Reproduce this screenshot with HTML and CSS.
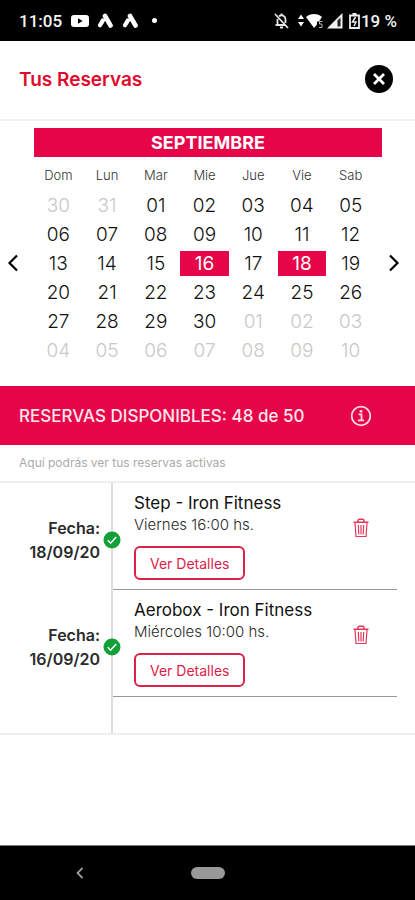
FILE: index.html
```html
<!DOCTYPE html>
<html lang="es">
<head>
<meta charset="utf-8">
<meta name="viewport" content="width=device-width, initial-scale=1">
<title>Tus Reservas</title>
<link rel="stylesheet" href="styles.css">
</head>
<body>
<div class="status">
  <span class="clock">11:05</span>
  <svg class="s-yt" width="20" height="14" viewBox="0 0 20 14"><rect x="1" y="1" width="18" height="12" rx="3" fill="#fff"/><path d="M8 4.200v5.600L12.600 7z" fill="#000"/></svg>
  <svg class="s-app" width="17" height="16" viewBox="0 0 17 16"><path d="M8 3l5.500 9.500" fill="none" stroke="#fff" stroke-width="4.600" stroke-linecap="round"/><path d="M5.800 7.500L3 12.300" fill="none" stroke="#fff" stroke-width="4.200" stroke-linecap="round"/><path d="M8 5.500L4.800 11" fill="none" stroke="#fff" stroke-width="2"/></svg>
  <svg class="s-app" width="17" height="16" viewBox="0 0 17 16"><path d="M8 3l5.500 9.500" fill="none" stroke="#fff" stroke-width="4.600" stroke-linecap="round"/><path d="M5.800 7.500L3 12.300" fill="none" stroke="#fff" stroke-width="4.200" stroke-linecap="round"/><path d="M8 5.500L4.800 11" fill="none" stroke="#fff" stroke-width="2"/></svg>
  <span class="s-dot"></span>
  <span class="s-right">
    <svg width="17" height="18" viewBox="0 0 17 18" fill="none" stroke="#e6e6e6" stroke-width="1.800"><path d="M2 2l13 14M4.500 7v6H2.500h9M6 4.200C9 2 12.500 4 12.500 7.500V11M7 15.500h3M8.500 1.500v2"/></svg>
    <svg class="s-wifi" width="26" height="16" viewBox="0 0 26 16"><path d="M3 1.500l3 4.500H0zM3 13.500L6 9H0z" fill="#fff"/><path d="M8 4C12 0 20 0 24 4l-3 4.500h-2v3L16 15z" fill="#fff"/><path d="M24.500 8.500h-3v2.500h2.500v3.500h-3" fill="none" stroke="#bbb"/></svg>
    <svg class="s-cell" width="16" height="16" viewBox="0 0 16 16"><path d="M0 15.500L15.500 0v15.500z" fill="#f2f2f2"/><path d="M10.500 7.500L13.500 4.500v9h-3z" fill="#222"/></svg>
    <svg class="s-bat" width="11" height="16" viewBox="0 0 11 16"><path d="M1 2.500h9V15H1zM3.500 1h4" fill="none" stroke="#eee" stroke-width="1.800"/><path d="M6.500 4L3.500 9H7l-2 4" fill="none" stroke="#eee" stroke-width="1.500"/></svg>
    <span class="percent">19 %</span>
  </span>
</div>

<header class="header">
  <h1>Tus Reservas</h1>
  <button class="close" aria-label="Cerrar"><svg width="28" height="28" viewBox="0 0 28 28"><circle cx="14" cy="14" r="14" fill="#000"/><path d="M9 9l10 10M19 9L9 19" stroke="#fff" stroke-width="2.800"/></svg></button>
</header>

<section class="calendar">
  <button class="arrow" aria-label="Mes anterior"><svg width="12" height="18" viewBox="0 0 12 18"><path d="M10 1.500L2.500 9l7.500 7.500" fill="none" stroke="#000" stroke-width="2.200"/></svg></button>
  <div class="month">
    <h2>SEPTIEMBRE</h2>
    <table>
      <thead><tr><th>Dom</th><th>Lun</th><th>Mar</th><th>Mie</th><th>Jue</th><th>Vie</th><th>Sab</th></tr></thead>
      <tbody>
        <tr><td class="out">30</td><td class="out">31</td><td>01</td><td>02</td><td>03</td><td>04</td><td>05</td></tr>
        <tr><td>06</td><td>07</td><td>08</td><td>09</td><td>10</td><td>11</td><td>12</td></tr>
        <tr><td>13</td><td>14</td><td>15</td><td class="booked">16</td><td>17</td><td class="booked">18</td><td>19</td></tr>
        <tr><td>20</td><td>21</td><td>22</td><td>23</td><td>24</td><td>25</td><td>26</td></tr>
        <tr><td>27</td><td>28</td><td>29</td><td>30</td><td class="out">01</td><td class="out">02</td><td class="out">03</td></tr>
        <tr><td class="out">04</td><td class="out">05</td><td class="out">06</td><td class="out">07</td><td class="out">08</td><td class="out">09</td><td class="out">10</td></tr>
      </tbody>
    </table>
  </div>
  <button class="arrow" aria-label="Mes siguiente"><svg width="12" height="18" viewBox="0 0 12 18"><path d="M2 1.500L9.500 9 2 16.500" fill="none" stroke="#000" stroke-width="2.200"/></svg></button>
</section>

<section class="available">
  <h2>RESERVAS DISPONIBLES: 48 de 50</h2>
  <button aria-label="Información"><svg width="22" height="22" viewBox="0 0 22 22"><circle cx="11" cy="11" r="9.300" fill="none" stroke="#ffdbe5" stroke-width="1.800"/><path d="M8.500 9.300h3v6M8 15.400h6" fill="none" stroke="#ffdbe5" stroke-width="1.800"/><circle cx="11" cy="6.300" r="1.400" fill="#ffdbe5"/></svg></button>
</section>
<p class="hint">Aquí podrás ver tus reservas activas</p>

<main class="list">
  <article class="item">
    <p class="date">Fecha:<br>18/09/20</p>
    <svg class="check" width="18" height="18" viewBox="0 0 18 18"><circle cx="9" cy="9" r="8.500" fill="#14a038"/><path d="M4.800 9.300l2.800 2.900L13.200 6" fill="none" stroke="#fff" stroke-width="1.500"/></svg>
    <div class="body">
      <div class="info">
        <h3>Step - Iron Fitness</h3>
        <p>Viernes 16:00 hs.</p>
        <button class="details">Ver Detalles</button>
      </div>
      <button class="trash" aria-label="Eliminar"><svg width="16" height="20" viewBox="0 0 16 20" fill="none" stroke="#e2385a" stroke-width="1.200"><path d="M.5 4.200h15M5 4V2.600Q5 1.200 6.500 1.200h3Q11 1.200 11 2.600V4" stroke-width="1.500"/><path d="M2 5l1 13.500h10L14 5M5.300 7l.5 9.500M8 7v9.500M10.700 7l-.5 9.500"/></svg></button>
    </div>
  </article>
  <article class="item">
    <p class="date">Fecha:<br>16/09/20</p>
    <svg class="check" width="18" height="18" viewBox="0 0 18 18"><circle cx="9" cy="9" r="8.500" fill="#14a038"/><path d="M4.800 9.300l2.800 2.900L13.200 6" fill="none" stroke="#fff" stroke-width="1.500"/></svg>
    <div class="body">
      <div class="info">
        <h3>Aerobox - Iron Fitness</h3>
        <p>Miércoles 10:00 hs.</p>
        <button class="details">Ver Detalles</button>
      </div>
      <button class="trash" aria-label="Eliminar"><svg width="16" height="20" viewBox="0 0 16 20" fill="none" stroke="#e2385a" stroke-width="1.200"><path d="M.5 4.200h15M5 4V2.600Q5 1.200 6.500 1.200h3Q11 1.200 11 2.600V4" stroke-width="1.500"/><path d="M2 5l1 13.500h10L14 5M5.300 7l.5 9.500M8 7v9.500M10.700 7l-.5 9.500"/></svg></button>
    </div>
  </article>
  <div class="tail"></div>
</main>

<nav class="nav">
  <button class="back" aria-label="Atrás"><svg width="8" height="12" viewBox="0 0 8 12"><path d="M6.500 1L1.500 6l5 5" fill="none" stroke="#9a9a9a" stroke-width="1.800"/></svg></button>
  <button class="home" aria-label="Inicio"></button>
</nav>
</body>
</html>
```
FILE: styles.css
```css
* { box-sizing: border-box; margin: 0; padding: 0; }
html { height: 100%; }
body {
  min-height: 100%;
  display: flex;
  flex-direction: column;
  background: #fff;
  color: #2a2a2a;
  font-family: Inter, "Liberation Sans", sans-serif;
}
button { background: none; border: 0; font: inherit; cursor: pointer; }
svg { display: block; }

.status {
  height: 41px;
  padding: 0 18px 0 19px;
  display: flex;
  align-items: center;
  background: #000;
  color: #f4f4f4;
  font: 500 17px/20px Roboto, sans-serif;
}
.clock { width: 51px; }
.s-yt { margin-right: 7px; }
.s-app { margin-right: 8px; }
.s-dot { width: 5px; height: 5px; margin-left: 5px; border-radius: 50%; background: #fff; }
.s-right { display: flex; align-items: center; margin-left: auto; }
.s-wifi { margin-left: 8px; }
.s-cell { margin-left: 3px; }
.s-bat { margin: 0 1px 0 6px; }

.header {
  height: 80px;
  padding: 0 22px 2px 19px;
  display: flex;
  align-items: center;
  justify-content: space-between;
  border-bottom: 2px solid #f2f2f2;
}
h1 { font-size: 19px; font-weight: 600; color: #e00a2c; }

.calendar {
  padding: 7px 13px 19px 7px;
  display: flex;
  align-items: center;
}
.arrow { width: 20px; flex: none; padding-top: 30px; }
.arrow:first-child { width: 27px; }
.arrow:last-child { padding-left: 6px; }
.month { flex: 1; }
.month h2 {
  background: #e60549;
  color: #fff;
  font-size: 18px;
  line-height: 29px;
  font-weight: 700;
  text-align: center;
}
table {
  width: 98%;
  table-layout: fixed;
  border-collapse: separate;
  border-spacing: 0 4px;
}
th { height: 28px; font-size: 13px; font-weight: 300; color: #333; }
td { height: 25px; font-size: 19px; line-height: 25px; font-weight: 300; text-align: center; color: #111; }
.out { color: #c8c8c8; }
.booked { background: #e60549; color: #fff; font-weight: 400; }

.available {
  height: 59px;
  padding: 0 43px 0 19px;
  display: flex;
  align-items: center;
  justify-content: space-between;
  background: #e60549;
  color: #ffe6ed;
}
.available h2 { font-size: 17px; font-weight: 500; }
.hint { padding: 8px 19px; font-size: 12px; line-height: 20px; color: #aaa; }

.list {
  border-top: 2px solid #eee;
  border-bottom: 2px solid #eee;
}
.item { display: grid; grid-template-columns: 113px 1fr; position: relative; }
.date {
  padding: 33px 13px 0 0;
  font-size: 16px;
  line-height: 24px;
  font-weight: 600;
  text-align: right;
}
.check { position: absolute; left: 103px; top: 48px; }
.body {
  margin-right: 18px;
  padding: 8px 28px 9px 21px;
  display: flex;
  justify-content: space-between;
  align-items: flex-start;
  border-bottom: 1px solid #999;
  box-shadow: -2px 0 #ddd;
}
.info h3 { font-size: 17px; line-height: 24px; font-weight: 400; color: #111; }
.info p { font-size: 15px; line-height: 20px; font-weight: 300; }
.details {
  height: 34px;
  margin-top: 11px;
  padding: 0 14px;
  border: 2px solid #dc2346;
  border-radius: 6px;
  color: #dc1c4a;
  font-size: 14px;
}
.trash { margin-top: 27px; }
.tail { height: 36px; margin-left: 111px; border-left: 2px solid #ddd; }

.nav {
  height: 55px;
  margin-top: auto;
  display: grid;
  grid-template-columns: 1fr 34px 1fr;
  align-items: center;
  background: #000;
  border-top: 1px solid #777;
}
.back { justify-self: start; margin-left: 76px; }
.home { height: 12px; border-radius: 6px; background: #999; }
```
